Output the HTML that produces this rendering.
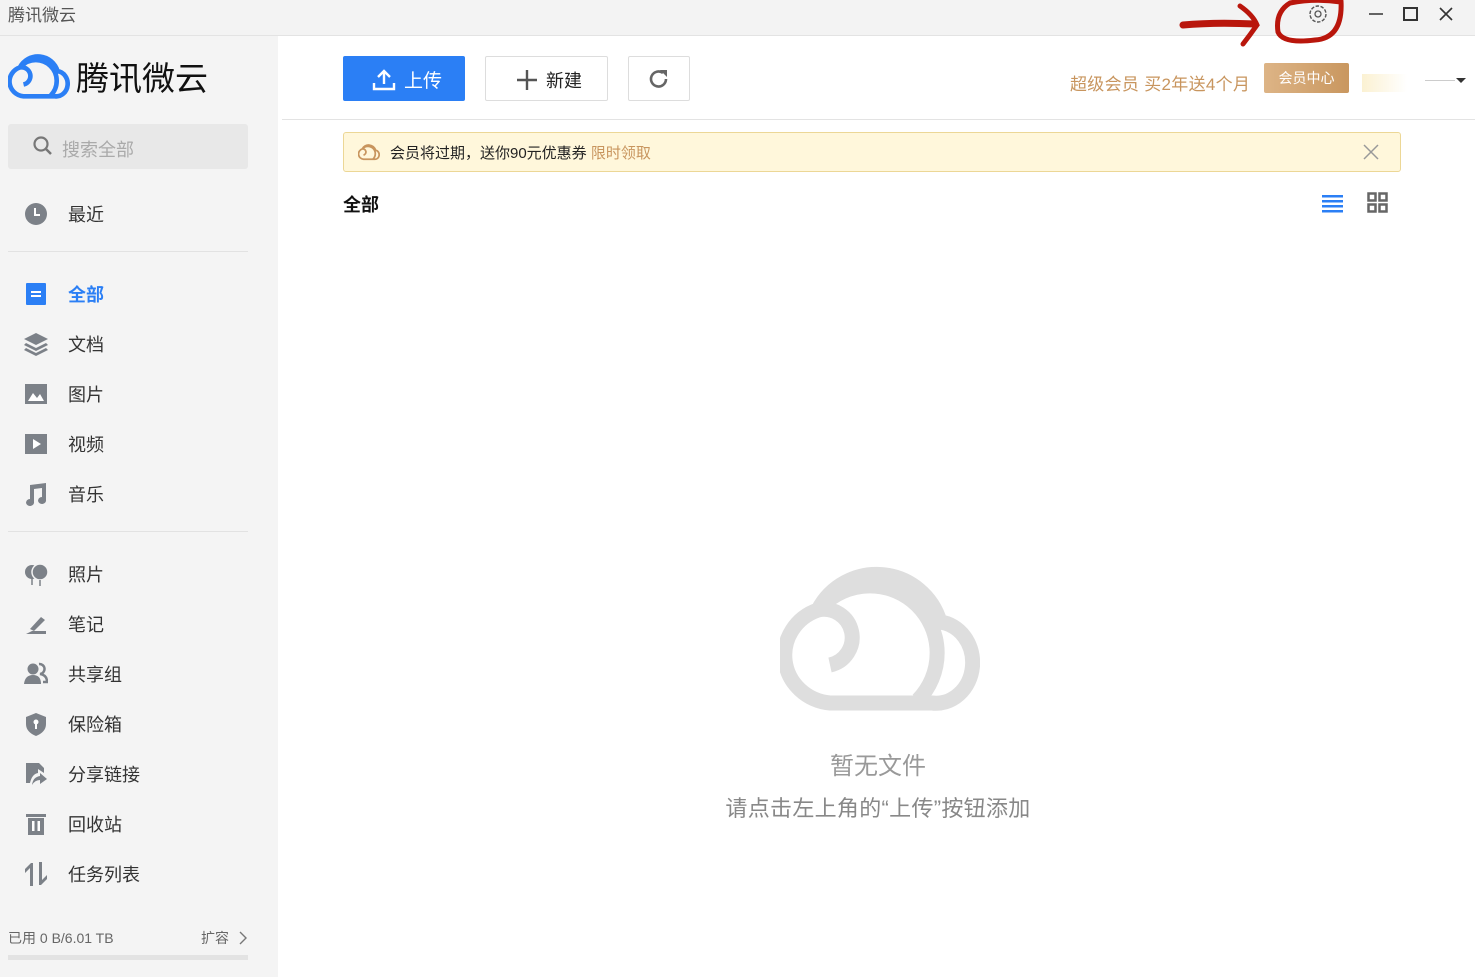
<!DOCTYPE html>
<html><head><meta charset="utf-8"><style>
*{margin:0;padding:0;box-sizing:border-box}
body{width:1475px;height:977px;position:relative;background:#fff;font-family:"Liberation Sans","Noto Sans CJK SC",sans-serif;overflow:hidden}
.a{position:absolute}
.side{left:0;top:36px;width:278px;height:941px;background:#f4f4f4}
.item{position:absolute;left:68px;font-size:18px;color:#333;line-height:24px}
.ic{position:absolute;left:24px;width:24px;height:24px}
</style></head><body>
<div class="a" style="left:0;top:0;width:1475px;height:36px;background:#f3f3f3;border-bottom:1px solid #e3e3e3"></div>
<div class="a" style="left:8px;top:1px;font-size:17px;color:#555">腾讯微云</div>
<svg class="a" style="left:1300px;top:0" width="175" height="30">
<circle cx="18" cy="14" r="8" fill="none" stroke="#555" stroke-width="1.4" stroke-dasharray="3.5 1.5"/><circle cx="18" cy="14" r="3" fill="none" stroke="#555" stroke-width="1.3"/>
<line x1="69" y1="14" x2="83" y2="14" stroke="#333" stroke-width="1.5"/>
<rect x="104" y="8" width="13" height="12" fill="none" stroke="#333" stroke-width="2"/>
<path d="M140 8 L152 20 M152 8 L140 20" stroke="#333" stroke-width="1.6"/>
</svg>
<svg class="a" style="left:1175px;top:0" width="180" height="50">
<path d="M8 25 Q40 22 80 24" stroke="#b9160c" stroke-width="7" fill="none" stroke-linecap="round"/>
<path d="M65 6 Q78 15 82 25 Q75 35 68 44" stroke="#b9160c" stroke-width="5" fill="none" stroke-linecap="round"/>
<path d="M166 1 Q168 38 140 40 Q108 44 103 32 Q100 12 115 3 Q140 -2 166 2" stroke="#b9160c" stroke-width="5" fill="none" stroke-linecap="round"/>
</svg>

<div class="a side"></div>
<svg class="a" style="left:8px;top:52px" width="62" height="48" viewBox="780 560 200 155"><path d="M830 703 H932 A36 40 0 0 0 940 622 A66 66 0 0 0 818 610 A50 48 0 0 0 830 703 Z M918 700 A66 66 0 0 0 822 606 M818 610 A28 28 0 1 1 830 665" fill="none" stroke="#2b7ff5" stroke-width="15"/></svg>
<div class="a" style="left:76px;top:57px;font-size:33px;color:#111;line-height:44px">腾讯微云</div>
<div class="a" style="left:8px;top:124px;width:240px;height:45px;background:#e8e8e8;border-radius:3px"></div>
<svg class="a" style="left:32px;top:135px" width="22" height="22"><circle cx="9" cy="9" r="6.5" fill="none" stroke="#777" stroke-width="2.2"/><line x1="14" y1="14" x2="19" y2="19" stroke="#777" stroke-width="2.5"/></svg>
<div class="a" style="left:62px;top:136px;font-size:18px;color:#aaa">搜索全部</div>

<svg class="ic" style="top:202px"><circle cx="12" cy="12" r="11" fill="#7c8188"/><path d="M11 6 V13 H16" stroke="#fff" stroke-width="2" fill="none"/></svg>
<div class="item" style="top:203px">最近</div>
<div class="a" style="left:8px;top:251px;width:240px;height:1px;background:#e2e2e2"></div>

<svg class="ic" style="top:282px"><rect x="2" y="1" width="20" height="22" rx="1" fill="#2b7ff5"/><rect x="7" y="9" width="10" height="2" fill="#fff"/><rect x="7" y="13" width="10" height="2" fill="#fff"/></svg>
<div class="item" style="top:283px;color:#2b7ff5;font-weight:bold">全部</div>
<svg class="ic" style="top:332px"><path d="M12 1 L24 7 L12 13 L0 7Z" fill="#7c8188"/><path d="M2 11 L12 16 L22 11 L24 13 L12 19 L0 13Z M2 16 L12 21 L22 16 L24 18 L12 24 L0 18Z" fill="#7c8188"/></svg>
<div class="item" style="top:333px">文档</div>
<svg class="ic" style="top:382px"><rect x="1" y="2" width="22" height="20" fill="#7c8188"/><path d="M4 19 L9 11 L13 16 L16 12 L20 19Z" fill="#fff"/></svg>
<div class="item" style="top:383px">图片</div>
<svg class="ic" style="top:432px"><rect x="1" y="2" width="22" height="20" fill="#7c8188"/><path d="M9 7 L17 12 L9 17Z" fill="#fff"/></svg>
<div class="item" style="top:433px">视频</div>
<svg class="ic" style="top:482px"><path d="M6 3 L22 1 V18 A4 3.5 0 1 1 18 15 V6 L10 7 V20 A4 3.5 0 1 1 6 17Z" fill="#7c8188"/></svg>
<div class="item" style="top:483px">音乐</div>
<div class="a" style="left:8px;top:531px;width:240px;height:1px;background:#e2e2e2"></div>

<svg class="ic" style="top:562px"><ellipse cx="8" cy="10" rx="7" ry="7" fill="#7c8188"/><ellipse cx="16" cy="10" rx="8" ry="8" fill="#7c8188" stroke="#f4f4f4" stroke-width="1.5"/><path d="M8 16 V23 M16 18 V24" stroke="#7c8188" stroke-width="1.5"/></svg>
<div class="item" style="top:563px">照片</div>
<svg class="ic" style="top:612px"><path d="M2 22 H22 V19 H8Z M6 17 L17 5 L21 8 L10 19Z" fill="#7c8188"/></svg>
<div class="item" style="top:613px">笔记</div>
<svg class="ic" style="top:662px"><circle cx="9" cy="7" r="5.5" fill="#7c8188"/><path d="M0 22 Q1 13 9 13 Q17 13 17 22Z" fill="#7c8188"/><path d="M15 2 A5 5 0 0 1 16 12 Q23 13 23 20 H19" fill="none" stroke="#7c8188" stroke-width="2.5"/></svg>
<div class="item" style="top:663px">共享组</div>
<svg class="ic" style="top:712px"><path d="M12 1 L22 5 V12 Q22 20 12 24 Q2 20 2 12 V5Z" fill="#7c8188"/><circle cx="12" cy="10" r="2.5" fill="#fff"/><rect x="11" y="11" width="2" height="6" fill="#fff"/></svg>
<div class="item" style="top:713px">保险箱</div>
<svg class="ic" style="top:762px"><path d="M2 1 H15 L20 6 V11 L14 7 V11 Q8 12 6 21 H2Z" fill="#7c8188"/><path d="M8 23 Q9 15 16 14 V11 L23 17 L16 22 V18 Q11 18 8 23Z" fill="#7c8188"/></svg>
<div class="item" style="top:763px">分享链接</div>
<svg class="ic" style="top:812px"><rect x="2" y="2" width="20" height="3" fill="#7c8188"/><rect x="4" y="6" width="16" height="17" fill="#7c8188"/><rect x="8" y="9" width="2.5" height="10" fill="#fff"/><rect x="13.5" y="9" width="2.5" height="10" fill="#fff"/></svg>
<div class="item" style="top:813px">回收站</div>
<svg class="ic" style="top:862px"><path d="M6 24 V6 L1 11 V7 L7 1 H9 V24Z M15 0 H18 V18 L23 13 V17 L17 23 H15Z" fill="#7c8188"/></svg>
<div class="item" style="top:863px">任务列表</div>

<div class="a" style="left:8px;top:928px;font-size:14px;color:#666">已用 0 B/6.01 TB</div>
<div class="a" style="left:201px;top:928px;font-size:14px;color:#666">扩容</div>
<svg class="a" style="left:237px;top:930px" width="12" height="16"><path d="M3 2 L9 8 L3 14" fill="none" stroke="#777" stroke-width="1.4"/></svg>
<div class="a" style="left:8px;top:955px;width:240px;height:5px;background:#e3e3e3"></div>

<div class="a" style="left:343px;top:56px;width:122px;height:45px;background:#2b7ff5;border-radius:2px"></div>
<svg class="a" style="left:372px;top:68px" width="24" height="24"><path d="M12 3 V16 M6 9 L12 3 L18 9" stroke="#fff" stroke-width="2.4" fill="none"/><path d="M2 15 V21 H22 V15" stroke="#fff" stroke-width="2.4" fill="none"/></svg>
<div class="a" style="left:404px;top:66px;font-size:19px;color:#fff">上传</div>
<div class="a" style="left:485px;top:56px;width:123px;height:45px;border:1px solid #ddd;border-radius:2px"></div>
<svg class="a" style="left:515px;top:68px" width="24" height="24"><path d="M12 2 V22 M2 12 H22" stroke="#555" stroke-width="2.4"/></svg>
<div class="a" style="left:546px;top:67px;font-size:18px;color:#222">新建</div>
<div class="a" style="left:628px;top:56px;width:62px;height:45px;border:1px solid #ddd;border-radius:2px"></div>
<svg class="a" style="left:647px;top:67px" width="24" height="24"><path d="M19 12 A7.5 7.5 0 1 1 16 6" stroke="#666" stroke-width="2.6" fill="none"/><path d="M13 3 L20 3 L20 10Z" fill="#666"/></svg>

<div class="a" style="left:1070px;top:70px;font-size:17px;color:#c8955e;letter-spacing:0.3px">超级会员 买2年送4个月</div>
<div class="a" style="left:1264px;top:63px;width:85px;height:30px;background:linear-gradient(90deg,#ddb486,#c9975f);border-radius:2px;color:#fff;font-size:14px;text-align:center;line-height:30px">会员中心</div>
<div class="a" style="left:1362px;top:74px;width:45px;height:18px;background:linear-gradient(90deg,#fbf1d2,#fff)"></div>
<div class="a" style="left:1425px;top:80px;width:30px;height:1px;background:#ccc"></div>
<svg class="a" style="left:1456px;top:77px" width="12" height="8"><path d="M0 1 H10 L5 6Z" fill="#333"/></svg>
<div class="a" style="left:282px;top:119px;width:1193px;height:1px;background:#e3e3e3"></div>

<div class="a" style="left:343px;top:132px;width:1058px;height:40px;background:#fff7db;border:1px solid #ecd796;border-radius:3px"></div>
<svg class="a" style="left:358px;top:142px" width="22" height="20" viewBox="780 560 200 155"><path d="M830 703 H932 A36 40 0 0 0 940 622 A66 66 0 0 0 818 610 A50 48 0 0 0 830 703 Z M918 700 A66 66 0 0 0 822 606 M818 610 A28 28 0 1 1 830 665" fill="none" stroke="#c8955e" stroke-width="16"/></svg>
<div class="a" style="left:390px;top:142px;font-size:15px;color:#222">会员将过期，送你90元优惠券 <span style="color:#c8955e">限时领取</span></div>
<svg class="a" style="left:1363px;top:144px" width="16" height="16"><path d="M1 1 L15 15 M15 1 L1 15" stroke="#999" stroke-width="1.5"/></svg>

<div class="a" style="left:343px;top:191px;font-size:18px;font-weight:bold;color:#111">全部</div>
<svg class="a" style="left:1322px;top:193px" width="22" height="20"><rect x="0" y="2" width="21" height="2.5" fill="#2b7ff5"/><rect x="0" y="7" width="21" height="2.5" fill="#2b7ff5"/><rect x="0" y="12" width="21" height="2.5" fill="#2b7ff5"/><rect x="0" y="17" width="21" height="2.5" fill="#2b7ff5"/></svg>
<svg class="a" style="left:1367px;top:192px" width="22" height="22"><g fill="none" stroke="#666" stroke-width="2.5"><rect x="1.5" y="1.5" width="7" height="7"/><rect x="12.5" y="1.5" width="7" height="7"/><rect x="1.5" y="12.5" width="7" height="7"/><rect x="12.5" y="12.5" width="7" height="7"/></g></svg>

<svg class="a" style="left:780px;top:560px" width="200" height="155" viewBox="780 560 200 155"><path d="M830 703 H932 A36 40 0 0 0 940 622 A66 66 0 0 0 818 610 A50 48 0 0 0 830 703 Z M918 700 A66 66 0 0 0 822 606 M818 610 A28 28 0 1 1 830 665" fill="none" stroke="#dedede" stroke-width="15"/></svg>
<div class="a" style="left:278px;width:1200px;top:746px;text-align:center;font-size:24px;color:#999">暂无文件</div>
<div class="a" style="left:278px;width:1200px;top:791px;text-align:center;font-size:22px;color:#888;letter-spacing:0.3px">请点击左上角的“上传”按钮添加</div>
</body></html>
